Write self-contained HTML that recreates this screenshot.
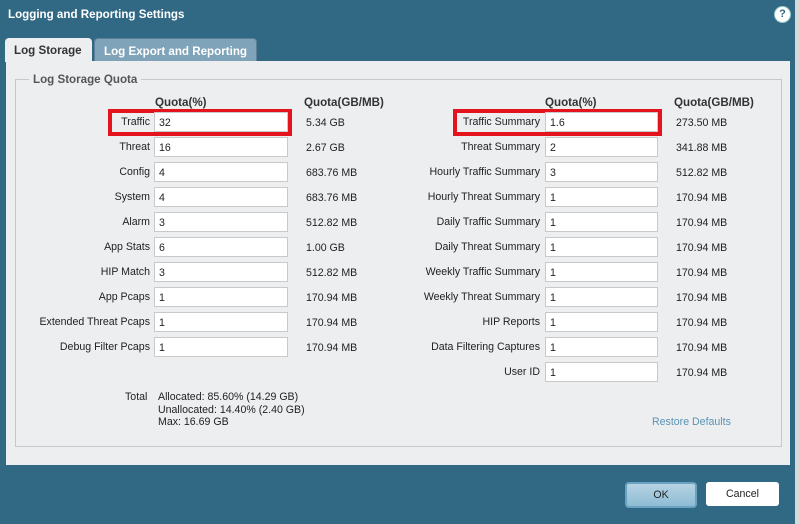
<!DOCTYPE html>
<html><head><style>
*{margin:0;padding:0;box-sizing:border-box}
body{width:800px;height:524px;background:#d8d8d8;font-family:"Liberation Sans",sans-serif;font-size:10.6px;color:#222;position:relative;overflow:hidden}
.dlg{position:absolute;left:0;top:0;width:795px;height:524px;background:#316985}
.title{position:absolute;left:8px;top:8px;color:#fff;font-weight:bold;font-size:11.6px}
.help{position:absolute;left:775px;top:7px;width:15px;height:15px;border-radius:50%;background:#fff;color:#316985;font-weight:bold;font-size:11px;text-align:center;line-height:15px;box-shadow:0 0 0 1px #9cc}
.tab{position:absolute;top:38px;height:24px;border-radius:4px 4px 0 0;font-weight:bold;font-size:11.6px;padding:6px 0 0 9px}
.t1{left:5px;width:87px;background:#eceef0;color:#333}
.t2{left:94px;width:163px;background:#7fa3b8;color:#fff;border:1px solid #5b8097}
.panel{position:absolute;left:6px;top:61px;width:784px;height:404px;background:#eceef0}
.fs{position:absolute;left:9px;top:18px;width:767px;height:368px;border:1px solid #c8c8c8}
.lg{position:absolute;left:23px;top:12px;background:#eceef0;padding:0 4px;font-weight:bold;color:#555;font-size:11.6px}
.a{position:absolute;white-space:nowrap}
.r{text-align:right}
.in{position:absolute;height:20px;background:#fff;border:1px solid #c9c9c9;padding:4px 0 0 4px}
.h{font-weight:bold;color:#333;font-size:11.6px}
.red{position:absolute;border:4px solid #e3141e}
.ok{position:absolute;left:625px;top:482px;width:72px;height:26px;border-radius:4px;background:linear-gradient(#b6d3e3,#8ebcd4);border:2px solid #6aa3c2;text-align:center;line-height:22px}
.cancel{position:absolute;left:706px;top:482px;width:73px;height:24px;border-radius:3px;background:#fff;text-align:center;line-height:24px}
</style></head><body>
<div class="dlg">
<div class="title">Logging and Reporting Settings</div>
<div class="help">?</div>
<div class="tab t2">Log Export and Reporting</div>
<div class="panel"><div class="fs"></div><div class="lg">Log Storage Quota</div></div>
<div class="tab t1">Log Storage</div>
<div class="a h" style="left:155px;top:96px">Quota(%)</div>
<div class="a h" style="left:304px;top:96px">Quota(GB/MB)</div>
<div class="a h" style="left:545px;top:96px">Quota(%)</div>
<div class="a h" style="left:674px;top:96px">Quota(GB/MB)</div>
<div class="red" style="left:108px;top:109px;width:184px;height:27px"></div>
<div class="red" style="left:453px;top:109px;width:209px;height:27px"></div>
<div id="rows"></div>
<div class="a" style="left:125px;top:391px">Total</div>
<div class="a" style="left:158px;top:391px;line-height:12.5px">Allocated: 85.60% (14.29 GB)<br>Unallocated: 14.40% (2.40 GB)<br>Max: 16.69 GB</div>
<div class="a" style="left:652px;top:416px;color:#5a93b5">Restore Defaults</div>
<div class="ok">OK</div>
<div class="cancel">Cancel</div>
</div>
<script>
var L=[["Traffic","32","5.34 GB"],["Threat","16","2.67 GB"],["Config","4","683.76 MB"],["System","4","683.76 MB"],["Alarm","3","512.82 MB"],["App Stats","6","1.00 GB"],["HIP Match","3","512.82 MB"],["App Pcaps","1","170.94 MB"],["Extended Threat Pcaps","1","170.94 MB"],["Debug Filter Pcaps","1","170.94 MB"]];
var R=[["Traffic Summary","1.6","273.50 MB"],["Threat Summary","2","341.88 MB"],["Hourly Traffic Summary","3","512.82 MB"],["Hourly Threat Summary","1","170.94 MB"],["Daily Traffic Summary","1","170.94 MB"],["Daily Threat Summary","1","170.94 MB"],["Weekly Traffic Summary","1","170.94 MB"],["Weekly Threat Summary","1","170.94 MB"],["HIP Reports","1","170.94 MB"],["Data Filtering Captures","1","170.94 MB"],["User ID","1","170.94 MB"]];
var h="";
L.forEach(function(r,i){var y=112+25*i;h+='<div class="a r" style="right:645px;top:'+(y+4)+'px">'+r[0]+'</div><div class="in" style="left:154px;top:'+y+'px;width:134px">'+r[1]+'</div><div class="a" style="left:306px;top:'+(y+5)+'px">'+r[2]+'</div>';});
R.forEach(function(r,i){var y=112+25*i;h+='<div class="a r" style="right:255px;top:'+(y+4)+'px">'+r[0]+'</div><div class="in" style="left:545px;top:'+y+'px;width:113px">'+r[1]+'</div><div class="a" style="left:676px;top:'+(y+5)+'px">'+r[2]+'</div>';});
document.getElementById("rows").innerHTML=h;
</script>
</body></html>
